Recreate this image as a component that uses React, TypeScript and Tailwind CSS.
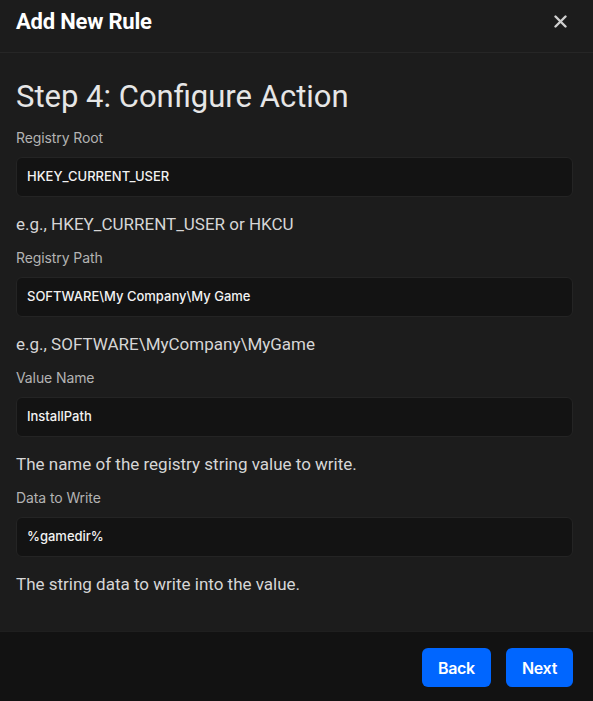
import React from "react";

function Field({ label, value, help }: { label: string; value: string; help: string }) {
  return (
    <div className="flex flex-col">
      <label className="text-[14px] leading-[20px] text-[#b3b3b3] font-['Inter',sans-serif] tracking-[-0.1px]">{label}</label>
      <div className="mt-[9px] h-[40px] rounded-[6px] border border-[#242424] bg-[#131313] px-[10px] flex items-center">
        <span className="text-[13px] text-[#f2f2f2] font-['Inter',sans-serif] font-medium">{value}</span>
      </div>
      <p className="mt-[15px] text-[17px] leading-[24px] text-[#d6d6d6] font-['Roboto',sans-serif]">{help}</p>
    </div>
  );
}

export default function App() {
  return (
    <div className="w-[593px] h-[701px] bg-[#1c1c1c] flex flex-col overflow-hidden">
      <div className="h-[53px] shrink-0 border-b border-[#262626] flex items-start justify-between pl-4 pr-[26px] pt-[8px]">
        <h1 className="text-[22px] leading-[28px] font-bold text-white font-['Roboto',sans-serif] tracking-[-0.2px]">Add New Rule</h1>
        <svg width="13" height="13" viewBox="0 0 13 13" className="text-[#cfcfcf] mt-[7px]">
          <path d="M1.5 1.5 L11.5 11.5 M11.5 1.5 L1.5 11.5" stroke="currentColor" strokeWidth="2.4" strokeLinecap="round" />
        </svg>
      </div>
      <div className="flex-1 pl-4 pr-5 pt-[25px]">
        <h2 className="text-[31px] leading-[37px] text-[#e6e6e6] font-['Roboto',sans-serif] mb-[13px]">Step 4: Configure Action</h2>
        <div className="flex flex-col gap-[12px]">
          <Field label="Registry Root" value="HKEY_CURRENT_USER" help="e.g., HKEY_CURRENT_USER or HKCU" />
          <Field label="Registry Path" value="SOFTWARE\My Company\My Game" help="e.g., SOFTWARE\MyCompany\MyGame" />
          <Field label="Value Name" value="InstallPath" help="The name of the registry string value to write." />
          <Field label="Data to Write" value="%gamedir%" help="The string data to write into the value." />
        </div>
      </div>
      <div className="h-[70px] shrink-0 bg-[#121212] border-t border-[#1f1f1f] flex items-start justify-end gap-[15px] pr-5 pt-[16px]">
        <button className="h-[39px] px-4 rounded-[6px] bg-[#0066ff] text-white text-[16px] font-semibold font-['Inter',sans-serif] tracking-[-0.3px]">Back</button>
        <button className="h-[39px] px-4 rounded-[6px] bg-[#0066ff] text-white text-[16px] font-semibold font-['Inter',sans-serif] tracking-[-0.3px]">Next</button>
      </div>
    </div>
  );
}
